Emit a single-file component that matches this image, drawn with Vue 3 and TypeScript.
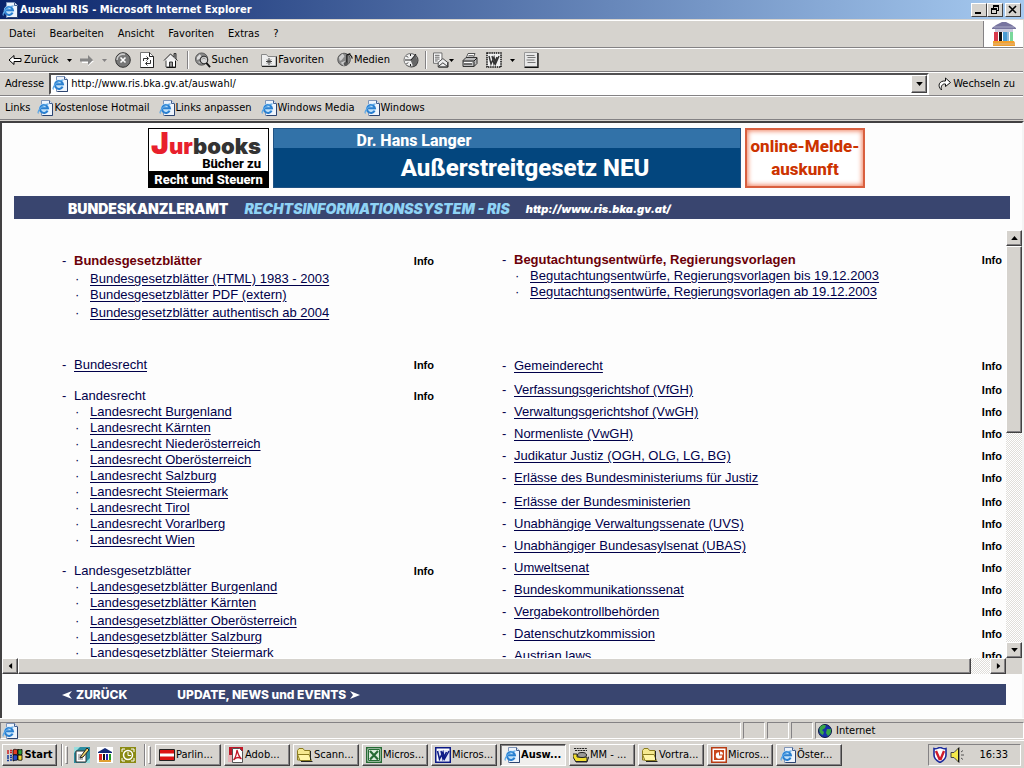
<script setup lang="ts">
import { ref } from 'vue'

interface Section {
  title: string
  space: string
  kind?: 'accent' | 'plain'
  items?: { text: string; loose?: boolean }[]
}

const address = ref('http://www.ris.bka.gv.at/auswahl/')
const menus = ['Datei', 'Bearbeiten', 'Ansicht', 'Favoriten', 'Extras', '?']
const quickLinks = ['Kostenlose Hotmail', 'Links anpassen', 'Windows Media', 'Windows']

const leftSections: Section[] = [
  {
    title: 'Bundesgesetzblätter', space: 'first', kind: 'accent',
    items: [
      { text: 'Bundesgesetzblätter (HTML) 1983 - 2003', loose: true },
      { text: 'Bundesgesetzblätter PDF (extern)' },
      { text: 'Bundesgesetzblätter authentisch ab 2004', loose: true },
    ],
  },
  { title: 'Bundesrecht', space: 'far' },
  {
    title: 'Landesrecht', space: 'mid', kind: 'plain',
    items: ['Burgenland', 'Kärnten', 'Niederösterreich', 'Oberösterreich', 'Salzburg', 'Steiermark', 'Tirol', 'Vorarlberg', 'Wien']
      .map((land) => ({ text: 'Landesrecht ' + land })),
  },
  {
    title: 'Landesgesetzblätter', space: 'mid', kind: 'plain',
    items: [
      { text: 'Landesgesetzblätter Burgenland' },
      { text: 'Landesgesetzblätter Kärnten' },
      { text: 'Landesgesetzblätter Oberösterreich', loose: true },
      { text: 'Landesgesetzblätter Salzburg' },
      { text: 'Landesgesetzblätter Steiermark' },
    ],
  },
]

const rightSections: Section[] = [
  {
    title: 'Begutachtungsentwürfe, Regierungsvorlagen', space: 'first', kind: 'accent',
    items: [
      { text: 'Begutachtungsentwürfe, Regierungsvorlagen bis 19.12.2003' },
      { text: 'Begutachtungsentwürfe, Regierungsvorlagen ab 19.12.2003' },
    ],
  },
  { title: 'Gemeinderecht', space: 'farther' },
  { title: 'Verfassungsgerichtshof (VfGH)', space: 'wide' },
  { title: 'Verwaltungsgerichtshof (VwGH)', space: 'near' },
  { title: 'Normenliste (VwGH)', space: 'near' },
  { title: 'Judikatur Justiz (OGH, OLG, LG, BG)', space: 'near' },
  { title: 'Erlässe des Bundesministeriums für Justiz', space: 'near' },
  { title: 'Erlässe der Bundesministerien', space: 'wide' },
  { title: 'Unabhängige Verwaltungssenate (UVS)', space: 'near' },
  { title: 'Unabhängiger Bundesasylsenat (UBAS)', space: 'near' },
  { title: 'Umweltsenat', space: 'near' },
  { title: 'Bundeskommunikationssenat', space: 'near' },
  { title: 'Vergabekontrollbehörden', space: 'near' },
  { title: 'Datenschutzkommission', space: 'near' },
  { title: 'Austrian laws', space: 'near' },
]
const columns = [leftSections, rightSections]

const tasks = [
  { icon: 'flag', text: 'Parlin...' },
  { icon: 'pdf', text: 'Adob...' },
  { icon: 'folder', text: 'Scann...' },
  { icon: 'excel', text: 'Micros...' },
  { icon: 'wordblue', text: 'Micros...' },
  { icon: 'ie', text: 'Ausw...', active: true },
  { icon: 'cab', text: 'MM - ...' },
  { icon: 'folder', text: 'Vortra...' },
  { icon: 'ppt', text: 'Micros...' },
  { icon: 'ie', text: 'Öster...' },
]
</script>

<template>
  <svg class="sprite" aria-hidden="true">
    <symbol id="ie" viewBox="0 0 16 16">
      <path d="M4.500 .5h8l3 3v12h-11z" fill="#eef4fc" stroke="#7f95b8" />
      <path d="M12.500 .5v3h3" fill="#dce6f5" stroke="#44608f" />
      <path d="M15.500 4v11.500h-10" fill="none" stroke="#2c4470" />
      <circle cx="6.800" cy="8.500" r="5" fill="#bfe0fa" />
      <path d="M10.600 10.800a4 4 0 1 1 .4-2.500H4" fill="none" stroke="#2a7fd0" stroke-width="2" />
      <path d="M1.500 13.500C-.5 11 6 4.200 11.500 3.800" fill="none" stroke="#5ba7e6" stroke-width="1.200" />
    </symbol>
    <symbol id="back" viewBox="0 0 14 12"><path d="M1 6l5-4.500V4.500h7v3H6v3z" fill="#fff" stroke="#000" /></symbol>
    <symbol id="fwd" viewBox="0 0 14 12"><path d="M14 7L8 12V9H2V7z" fill="#fff" /><path d="M13 6L8 1v3.500H0v3h8V11z" fill="#868686" /></symbol>
    <symbol id="caret" viewBox="0 0 5 3"><path d="M0 0h5L2.500 3z" fill="currentColor" /></symbol>
    <symbol id="stop" viewBox="0 0 16 16">
      <circle cx="8" cy="8" r="7.300" fill="#777" stroke="#333" /><path d="M2 8a6 6 0 0 1 8-5.500" fill="none" stroke="#ccc" stroke-width="1.500" />
      <path d="M5.500 5.500l5 5M10.500 5.500l-5 5" stroke="#fff" stroke-width="1.600" />
    </symbol>
    <symbol id="refresh" viewBox="0 0 14 16">
      <path d="M.5.500h9l4 4v11H.5z" fill="#fff" stroke="#777" /><path d="M9.500.500v4h4M13.500 4.500v11H.5" fill="none" stroke="#222" />
      <path d="M3.500 9V6.500H8M6.500 4.500l2 2-2 2M10.500 8v3.500H6M7.500 9.500l-2 2 2 2" fill="none" stroke="#333" />
    </symbol>
    <symbol id="home" viewBox="0 0 16 16">
      <path d="M3 7.500v7.500h9.500V7" fill="#fff" stroke="#444" /><path d="M1 8.500L7.500 2l7 6.500" fill="#eee" stroke="#222" />
      <path d="M11 5V1.500h2V7" fill="#999" stroke="#333" /><path d="M6.500 15v-5h3v5z" fill="#999" stroke="#333" /><path d="M12.500 9v6.500h-9" stroke="#111" fill="none" />
    </symbol>
    <symbol id="search" viewBox="0 0 17 16">
      <circle cx="7" cy="7" r="6.500" fill="#888" stroke="#555" /><path d="M2 5l3-3 2 2-2 3-3 1zM3 10l4-1 1 3" fill="#ddd" />
      <circle cx="9.500" cy="8" r="4" fill="#d8d8d8" stroke="#333" stroke-width="1.200" /><path d="M12 11l4 4.500" stroke="#111" stroke-width="2" />
      <path d="M7.500 7.500c1-2 3-2 4 0" stroke="#888" fill="none" />
    </symbol>
    <symbol id="fav" viewBox="0 0 16 14">
      <path d="M.5 13V1.500h5l1.500 2h8v9.500z" fill="#eee" stroke="#888" /><path d="M15.500 3.500v10H1" stroke="#222" fill="none" />
      <path d="M8 5v7M5 8.500h6M6 6.500l4 4M10 6.500l-4 4" stroke="#444" />
    </symbol>
    <symbol id="media" viewBox="0 0 17 16">
      <circle cx="7.500" cy="7.500" r="6.700" fill="#888" stroke="#555" /><path d="M2 5l4-4 2 3-3 4-2 1zM4 11l4-2 2 4-3 1z" fill="#ccc" />
      <path d="M10.500 12V2.500l3-1c0 2 3 2 2.500 5" fill="none" stroke="#111" stroke-width="1.300" /><circle cx="9" cy="12" r="2" fill="#555" />
    </symbol>
    <symbol id="history" viewBox="0 0 16 16">
      <circle cx="8.500" cy="8.500" r="7" fill="#444" /><circle cx="7.500" cy="8" r="6.500" fill="#f0f0f0" stroke="#777" />
      <path d="M7.500 8L13 2v4l2 2-2 4-3 2z" fill="#666" /><path d="M7.500 2v2M2 8h2M3.500 4l1.500 1.500M3.500 12L5 10.500M7.500 12v2M4 8h4l5-6" stroke="#222" fill="none" />
    </symbol>
    <symbol id="mail" viewBox="0 0 17 16">
      <path d="M.5.500h9v11h-9z" fill="#fff" stroke="#666" /><path d="M2 3h5M2 5h5M2 7h5M2 9h3" stroke="#555" />
      <path d="M5.500 10.500l5-4 5 4v5h-10z" fill="#eee" stroke="#444" /><path d="M5.500 15l5-4 5 4M16 10v5.500H6" fill="none" stroke="#333" />
    </symbol>
    <symbol id="print" viewBox="0 0 16 15">
      <path d="M4 6l2-5h7l-2 5z" fill="#fff" stroke="#555" /><path d="M6.500 3h5M6 4.500h5" stroke="#777" />
      <path d="M1 8l3-3h11v6l-3 3H1z" fill="#bbb" stroke="#333" /><path d="M1 8.500h11l3-3M12 9v5M2 11.500h8" stroke="#222" fill="none" /><path d="M2 10h8" stroke="#fff" />
    </symbol>
    <symbol id="wordgray" viewBox="0 0 16 16">
      <rect x="1" y="1" width="14" height="14" fill="#f2f2f2" stroke="#111" stroke-width="1.500" stroke-dasharray="1.500 .7" />
      <path d="M3 4l2 8 3-7 1.500 7L13 4M6 4l2 8 3-7" fill="none" stroke="#333" stroke-width="1.400" />
    </symbol>
    <symbol id="notes" viewBox="0 0 15 16">
      <path d="M1 .5h13v14H1z" fill="#e8e8e8" stroke="#999" /><path d="M14.500 1v14.500H1" fill="none" stroke="#111" stroke-width="1.300" /><path d="M3 3.500h8M4 5.500h8M3 8h8M4 10.500h8" stroke="#777" />
    </symbol>
    <symbol id="go" viewBox="0 0 14 14"><path d="M3.500 13C-1 9 1 3.500 7.500 4V1l5 4.500-5 4V7C4.500 6.500 2.500 9 3.500 13z" fill="#fff" stroke="#111" /></symbol>
    <symbol id="temple" viewBox="0 0 24 24">
      <path d="M0 6l4-3 6-3h4l6 3 4 3v1H0z" fill="#77749f" /><path d="M3 7h18v3H3z" fill="#c9c9dc" /><path d="M2 5h20" stroke="#aaa9c6" />
      <path d="M2 10h4v9H2z" fill="#d8394b" /><path d="M7 10h3v9H7z" fill="#111" /><path d="M11 10h4v9h-4z" fill="#4a9bd3" /><path d="M15 10h2v9h-2z" fill="#8bb9dd" /><path d="M18 10h3v9h-3z" fill="#79d79a" />
      <path d="M1 19h21l1 2v3H1z" fill="#f3a12c" /><path d="M1 22h22" stroke="#d9b58e" />
    </symbol>
    <symbol id="winflag" viewBox="0 0 17 14">
      <path d="M7 2c2-1.500 3 0 4.500-.5v5C9.500 7 9 6 7 7z" fill="#e33d20" stroke="#000" stroke-width=".8" /><path d="M12 1.500c1.500 0 2 .5 4 0v5c-2 .8-2.500 0-4 0z" fill="#2fa43a" stroke="#000" stroke-width=".8" />
      <path d="M7 7.500c2-1.500 3 0 4.500-.5v5C9.500 12.500 9 12 7 13z" fill="#2748c8" stroke="#000" stroke-width=".8" /><path d="M12 7c1.500 0 2 .5 4 0v5c-2 .8-2.500 0-4 0z" fill="#f2d72e" stroke="#000" stroke-width=".8" />
      <path d="M1 3h2M4 2.500h2M1 5h2M4 4.500h2" stroke="#c22" stroke-width="1.500" /><path d="M1 8h2M4 7.500h2M1 10h2M4 9.500h2M1 12.500h2M4 12h2" stroke="#113a9c" stroke-width="1.500" />
    </symbol>
    <symbol id="desktop" viewBox="0 0 16 16">
      <path d="M0 0h16v16H0z" fill="#2c8ea0" /><path d="M0 0h6L0 6zM16 16h-5l5-5z" fill="#9dd" /><path d="M2 4h10v11H2z" fill="#fff" stroke="#333" /><path d="M4 8h3M4 10h5M4 12h5" stroke="#777" /><path d="M7 9l6-8 2 2-6 7-3 1z" fill="#f1d36b" stroke="#222" />
    </symbol>
    <symbol id="minitemple" viewBox="0 0 16 16">
      <path d="M0 0h16v16H0z" fill="#fff" /><path d="M1 5l7-4 7 4v1H1z" fill="#142a78" /><path d="M2 7h3v6H2z" fill="#d22" /><path d="M6 7h2v6H6z" fill="#111" /><path d="M9 7h2v6H9z" fill="#22b" /><path d="M12 7h2v6h-2z" fill="#292" /><path d="M2 14h12" stroke="#e0a030" stroke-width="2" />
    </symbol>
    <symbol id="outlook" viewBox="0 0 16 16">
      <path d="M0 0h16v16H0z" fill="#8a8a12" /><path d="M2 2h3M2 2v3M14 2h-3M14 2v3M2 14h3M2 14v-3M14 14h-3M14 14v-3" stroke="#fff" /><circle cx="8" cy="8" r="4.500" fill="none" stroke="#fff" stroke-width="1.500" /><path d="M8 5v3.500h3" fill="none" stroke="#fff" />
    </symbol>
    <symbol id="flag" viewBox="0 0 16 16"><path d="M.5 2.500h15v11H.5z" fill="#fff" stroke="#222" /><path d="M1 3h14v3.500H1zM1 9.500h14V13H1z" fill="#dc1414" /></symbol>
    <symbol id="pdf" viewBox="0 0 16 16">
      <path d="M1 0h14v15H1z" fill="#c01828" /><path d="M4.500 1.500h7l3 3v11h-10z" fill="#fff" stroke="#555" /><path d="M5.500 13c2-2 3-6 3.500-10 1 4 2 7 4.500 9C11 10 8 10 5.500 13z" fill="none" stroke="#c01828" stroke-width="1.300" /><path d="M0 8h4v7H0z" fill="#e9b3b8" />
    </symbol>
    <symbol id="folder" viewBox="0 0 16 16">
      <path d="M.5 13V3.500l1.500-2h4l1.500 2H13V13z" fill="#f5e98f" stroke="#8a7c20" /><path d="M.5 7.500H12L14.500 13.500H3z" fill="#fff6a8" stroke="#8a7c20" /><path d="M13.500 4v9M4 14.500h11.500" stroke="#222" />
    </symbol>
    <symbol id="excel" viewBox="0 0 16 16"><path d="M.5.500h15v15H.5z" fill="#fff" stroke="#276b35" stroke-width="2" /><path d="M2.500 2.500h11v11h-11z" fill="#dcecdc" stroke="#276b35" /><path d="M4 4l8 8.500M12 4l-8 8.500" stroke="#276b35" stroke-width="2.200" /></symbol>
    <symbol id="wordblue" viewBox="0 0 16 16"><path d="M.5.500h15v15H.5z" fill="#fff" stroke="#0c1a86" stroke-width="2" /><path d="M3 3h11v11H3z" fill="#e3e6f6" /><path d="M2.500 4l2 8 3.500-7 1.500 7L14 4M6 4l2 8 3.500-7" fill="none" stroke="#0c1a86" stroke-width="1.500" /></symbol>
    <symbol id="cab" viewBox="0 0 16 16">
      <path d="M1 1.500h13M2 3.500h12" stroke="#222" stroke-dasharray="2 .7" /><path d="M0 7h4v3h10v5H3l-3-5z" fill="#f2df30" stroke="#222" /><ellipse cx="9" cy="8" rx="4.500" ry="2.500" fill="#999" stroke="#222" /><path d="M3 14.500h11l2-5" fill="none" stroke="#222" />
    </symbol>
    <symbol id="ppt" viewBox="0 0 16 16"><path d="M.5.500h15v15H.5z" fill="#fff" stroke="#b83c14" stroke-width="2" /><path d="M3 3h10v10H3z" fill="#c9471c" /><circle cx="8" cy="8.500" r="3.200" fill="#fff" /><path d="M8 8.500V4.500h4v4z" fill="#c9471c" /><path d="M9 7.500v-3c2 0 3 1 3 3z" fill="#fff" /></symbol>
    <symbol id="globe" viewBox="0 0 14 14"><circle cx="7" cy="7" r="6.500" fill="#1630a8" stroke="#0a1740" /><path d="M2 3c2-2 4-2.500 6-1.500L7 4 4 6l2 2-1 3C2 10 .5 7 2 3zM9 5l4 0c.5 3-.5 5-3 7L8 9z" fill="#37a545" /></symbol>
    <symbol id="shield" viewBox="0 0 14 16"><path d="M1 1.500c3 1 4-1 6-1 2 0 3 2 6 1V8c0 4-3 6-6 7.500C4 14 1 12 1 8z" fill="#fff" stroke="#1c2a9c" stroke-width="1.600" /><path d="M3 4l3.500 8h1.200L11 4" fill="none" stroke="#cf1c2c" stroke-width="2.400" /></symbol>
    <symbol id="speaker" viewBox="0 0 16 16"><path d="M1 5.500h3l5-5v15l-5-5H1z" fill="#f5e94a" stroke="#444" /><path d="M8.500 1v14" stroke="#111" /><path d="M11 5l2-1.500M11 8h3M11 11l2 1.500" stroke="#555" /></symbol>
    <symbol id="arrowhead" viewBox="0 0 10 8"><path d="M10 4L0 0l3 4-3 4z" fill="#fff" /></symbol>
  </svg>

  <div class="window">
    <header class="titlebar">
      <svg class="i16"><use href="#ie" /></svg>
      <h1>Auswahl RIS - Microsoft Internet Explorer</h1>
      <button class="winbtn" aria-label="Minimieren"><svg viewBox="0 0 10 9"><path d="M1 7h6v2H1z" /></svg></button>
      <button class="winbtn" aria-label="Wiederherstellen"><svg viewBox="0 0 10 9"><path d="M3 0h6v6H7V5h1V2H4v1H3z" /><path d="M1 3h6v6H1zM2 5v3h4V5z" fill-rule="evenodd" /></svg></button>
      <button class="winbtn close" aria-label="Schließen"><svg viewBox="0 0 10 9"><path d="M1 1l7 7M8 1L1 8" stroke="#000" stroke-width="1.600" /></svg></button>
    </header>

    <div class="band menuband">
      <nav class="menus"><button v-for="m in menus" :key="m">{{ m }}</button></nav>
      <div class="brand"><svg><use href="#temple" /></svg></div>
    </div>

    <div class="band toolbar">
      <button class="t-back"><svg class="arrow"><use href="#back" /></svg>Zurück</button>
      <button class="drop" aria-label="Zurück-Liste"><svg class="caret"><use href="#caret" /></svg></button>
      <button aria-label="Vorwärts"><svg class="arrow"><use href="#fwd" /></svg></button>
      <button class="drop dim" aria-label="Vorwärts-Liste"><svg class="caret"><use href="#caret" /></svg></button>
      <button class="solo" aria-label="Abbrechen"><svg class="i16"><use href="#stop" /></svg></button>
      <button class="solo" aria-label="Aktualisieren"><svg class="i16"><use href="#refresh" /></svg></button>
      <button class="solo" aria-label="Startseite"><svg class="i16"><use href="#home" /></svg></button>
      <i class="sep"></i>
      <button class="named"><svg class="i16"><use href="#search" /></svg>Suchen</button>
      <button class="named"><svg class="i16"><use href="#fav" /></svg>Favoriten</button>
      <button class="named"><svg class="i16"><use href="#media" /></svg>Medien</button>
      <button class="hist" aria-label="Verlauf"><svg class="i16"><use href="#history" /></svg></button>
      <i class="sep"></i>
      <button aria-label="E-Mail"><svg class="i16"><use href="#mail" /></svg><svg class="caret"><use href="#caret" /></svg></button>
      <button class="tail" aria-label="Drucken"><svg class="i16"><use href="#print" /></svg></button>
      <button class="tail" aria-label="Bearbeiten"><svg class="i16"><use href="#wordgray" /></svg></button>
      <button class="tail" aria-label="Bearbeiten-Liste"><svg class="caret"><use href="#caret" /></svg></button>
      <button class="tail" aria-label="Diskussion"><svg class="i16"><use href="#notes" /></svg></button>
    </div>

    <div class="band addressbar">
      <label for="addr">Adresse</label>
      <div class="field">
        <svg class="i16"><use href="#ie" /></svg>
        <input id="addr" v-model="address" type="text" />
        <button class="raised" aria-label="Adressliste"><svg class="bigcaret"><use href="#caret" /></svg></button>
      </div>
      <button class="go"><svg><use href="#go" /></svg>Wechseln zu</button>
    </div>

    <div class="band linkbar">
      <span>Links</span>
      <a v-for="l in quickLinks" :key="l" href="#"><svg class="i16"><use href="#ie" /></svg>{{ l }}</a>
    </div>

    <main class="page">
      <div class="ads">
        <a href="#" class="jur">
          <span class="jurname"><b>J</b><em>ur</em>books</span>
          <span class="jurline">Bücher zu</span>
          <span class="jurfoot">Recht und Steuern</span>
        </a>
        <a href="#" class="langer"><span class="who">Dr. Hans Langer</span><span class="what">Außerstreitgesetz NEU</span></a>
        <a href="#" class="melde"><span>online-Melde-</span><span>auskunft</span></a>
      </div>

      <div class="ribbon">
        <span class="bka">BUNDESKANZLERAMT</span>
        <span class="ris">RECHTSINFORMATIONSSYSTEM - RIS</span>
        <span class="url">http://www.ris.bka.gv.at/</span>
      </div>

      <section class="frame">
        <div class="view">
          <div v-for="(col, c) in columns" :key="c" class="col">
            <div v-for="s in col" :key="s.title" class="group" :class="s.space">
              <div class="head">
                <span class="dash">-</span>
                <h2 v-if="s.kind" :class="s.kind">{{ s.title }}</h2>
                <a v-else class="lnk" href="#">{{ s.title }}</a>
                <a class="info" href="#">Info</a>
              </div>
              <ul v-if="s.items">
                <li v-for="it in s.items" :key="it.text" :class="{ loose: it.loose }"><span class="dot">·</span><a class="lnk" href="#">{{ it.text }}</a></li>
              </ul>
            </div>
          </div>
        </div>
        <div class="vbar">
          <button class="raised" aria-label="Nach oben"><svg class="bigcaret up"><use href="#caret" /></svg></button>
          <div class="raised vthumb"></div>
          <div class="vtrack"></div>
          <button class="raised" aria-label="Nach unten"><svg class="bigcaret"><use href="#caret" /></svg></button>
        </div>
        <div class="hbar">
          <button class="raised" aria-label="Nach links"><svg class="bigcaret left"><use href="#caret" /></svg></button>
          <div class="raised hthumb"></div>
          <div class="htrack"></div>
          <button class="raised" aria-label="Nach rechts"><svg class="bigcaret right"><use href="#caret" /></svg></button>
        </div>
        <div class="corner"></div>
      </section>

      <nav class="bottomnav">
        <a href="#"><svg class="flip"><use href="#arrowhead" /></svg>ZURÜCK</a>
        <a href="#">UPDATE, NEWS und EVENTS<svg><use href="#arrowhead" /></svg></a>
      </nav>
    </main>

    <footer class="status">
      <div class="cell msg"><svg class="i16"><use href="#ie" /></svg></div>
      <div class="cell tiny"></div><div class="cell tiny"></div><div class="cell tiny"></div>
      <div class="cell zone"><svg class="i14"><use href="#globe" /></svg>Internet</div>
    </footer>

    <div class="taskbar">
      <button class="raised start"><svg><use href="#winflag" /></svg>Start</button>
      <i class="sep"></i><i class="grip"></i>
      <div class="quick">
        <button aria-label="Desktop anzeigen"><svg class="i16"><use href="#desktop" /></svg></button>
        <button aria-label="Browser"><svg class="i16"><use href="#minitemple" /></svg></button>
        <button aria-label="Outlook"><svg class="i16"><use href="#outlook" /></svg></button>
      </div>
      <i class="sep"></i><i class="grip"></i>
      <div class="tasks">
        <button v-for="(t, n) in tasks" :key="n" class="raised" :class="{ active: t.active }"><svg class="i16"><use :href="'#' + t.icon" /></svg>{{ t.text }}</button>
      </div>
      <div class="tray">
        <svg class="i16"><use href="#shield" /></svg><svg class="i16"><use href="#speaker" /></svg>
        <time>16:33</time>
      </div>
    </div>
  </div>
</template>

<style>
body { margin: 0; background: #d6d3ce; }
</style>

<style scoped>
* { box-sizing: border-box; }
.sprite { position: absolute; width: 0; height: 0; }
.window { display: flex; flex-direction: column; height: 100vh; min-height: 560px; overflow: hidden; background: #d6d3ce; color: #000; font: 11px/14px "DejaVu Sans Condensed", "DejaVu Sans", sans-serif; }
button { font: inherit; color: inherit; background: none; border: 0; padding: 0; margin: 0; display: flex; align-items: center; white-space: nowrap; }
a { color: inherit; text-decoration: none; }
svg { flex: none; display: block; }
.i16 { width: 16px; height: 16px; }
.i14 { width: 14px; height: 14px; }
.caret { width: 5px; height: 3px; }
.bigcaret { width: 7px; height: 4px; }
.up { transform: rotate(180deg); }
.left { transform: rotate(90deg); }
.right { transform: rotate(-90deg); }
.raised { background: #d6d3ce; border: 1px solid; border-color: #fff #424142 #424142 #fff; box-shadow: inset -1px -1px #848284; justify-content: center; }

.titlebar { display: flex; align-items: center; height: 19px; flex: none; padding: 0 3px 0 2px; background: linear-gradient(to right, #0a246a, #a6caf0); }
.titlebar h1 { flex: 1; margin: 0 0 0 2px; color: #fff; font-size: 11px; font-weight: bold; line-height: 18px; }
.winbtn { width: 16px; height: 14px; justify-content: center; background: #d6d3ce; border: 1px solid; border-color: #fff #424142 #424142 #fff; }
.winbtn svg { width: 10px; height: 9px; }
.close { margin-left: 2px; }

.band { display: flex; align-items: center; flex: none; height: 24px; border-top: 1px solid #fff; border-bottom: 1px solid #848284; padding-left: 5px; margin-right: 1px; }
.menuband { height: 28px; margin-top: 1px; padding-left: 9px; }
.menus { display: flex; gap: 14px; flex: 1; }
.brand { align-self: stretch; width: 40px; display: flex; align-items: center; justify-content: center; background: #fff; border-left: 1px solid #848284; }
.brand svg { width: 24px; height: 24px; }

.toolbar { padding-left: 8px; }
.arrow { width: 14px; height: 12px; }
.t-back { gap: 2px; }
.drop { padding: 0 8px; }
.dim { color: #848284; }
.solo { margin-right: 8px; }
.sep { width: 2px; height: 18px; border-left: 1px solid #848284; border-right: 1px solid #fff; margin-right: 6px; }
.named { margin-right: 13px; gap: 1px; }
.hist { margin-right: 6px; }
.tail { margin-left: 8px; }

.addressbar { padding-right: 8px; }
.addressbar label { margin-right: 5px; }
.field { flex: 1; display: flex; align-items: center; align-self: stretch; background: #fff; border: 2px solid; border-color: #525152 #fff #fff #525152; padding-left: 1px; }
.field input { flex: 1; min-width: 0; border: 0; outline: 0; padding: 0 0 0 3px; background: none; font: inherit; color: #000; }
.field .raised { width: 16px; align-self: stretch; }
.go { margin-left: 9px; gap: 1px; }
.go svg { width: 14px; height: 14px; }
.linkbar { gap: 9px; }
.linkbar span { margin-right: -2px; }
.linkbar a { display: flex; align-items: center; gap: 1px; }

.page { flex: 1; min-height: 0; display: flex; flex-direction: column; margin-top: 1px; padding-top: 5px; background: #fdfdfd; border-top: 2px solid #424142; border-left: 2px solid #424142; border-right: 2px solid #f4f4f4; }
.ads { display: flex; gap: 4px; height: 60px; flex: none; padding-left: 146px; font-family: Roboto, "Liberation Sans", sans-serif; font-weight: 800; white-space: nowrap; }
.jur { width: 121px; border: 1px solid #000; display: flex; flex-direction: column; background: #fff; }
.jurname { height: 26px; padding-left: 2px; color: #333; font: 900 22px/28px Inter, sans-serif; }
.jurname b { color: #e8202c; font-size: 30px; line-height: 28px; }
.jurname em { color: #e8202c; font-style: normal; }
.jurline { height: 16px; padding-right: 7px; text-align: right; font-size: 13px; line-height: 17px; }
.jurfoot { flex: 1; background: #000; color: #fff; text-align: center; font-size: 13px; line-height: 17px; }
.langer { width: 468px; display: flex; flex-direction: column; align-items: center; color: #fff; background: linear-gradient(#3272a8 19px, #03467e 19px); border: 1px solid #1f5284; }
.who { padding-right: 186px; font-size: 16px; line-height: 24px; }
.what { padding-left: 36px; font-size: 24px; line-height: 30px; }
.melde { width: 120px; display: flex; flex-direction: column; align-items: center; padding-top: 5px; color: #cc3300; background: #fff; border: 2px solid #d9603f; box-shadow: inset 0 0 5px 1px #f08060; font-size: 17px; line-height: 23px; }

.ribbon { display: flex; align-items: center; gap: 16px; flex: none; height: 23px; margin: 8px 12px 0; padding: 2px 0 0 54px; background: #39456f; color: #fff; font-family: Inter, "Liberation Sans", sans-serif; font-weight: 900; white-space: nowrap; }
.bka { font-size: 14px; }
.ris { font-size: 14px; font-style: italic; color: #8fd3f5; }
.url { font-size: 11px; font-style: italic; }

.frame { flex: 1; min-height: 0; display: grid; grid-template-columns: minmax(0, 1fr) 16px; grid-template-rows: minmax(0, 1fr) 16px; margin-top: 11px; }
.view { overflow: hidden; display: grid; grid-template-columns: 440fr 506fr; padding: 22px 0 0 58px; color: #00004a; font: 13px/16px "Liberation Sans", Arial, sans-serif; }
.col { padding-right: 66px; }
.col + .col { padding-right: 4px; }
.col:first-child .first { margin-top: 1px; }
.near { margin-top: 6px; }
.wide { margin-top: 8px; }
.mid { margin-top: 15px; }
.far { margin-top: 36px; }
.farther { margin-top: 58px; }
.head { display: flex; height: 16px; white-space: nowrap; }
.dash { width: 12px; padding-left: 2px; }
.dash + * { flex: none; margin: 0 auto 0 2px; }
h2 { font-size: 13px; font-weight: normal; }
h2.accent { font-weight: bold; color: #6b0008; }
.info { color: #000; font-size: 11px; font-weight: bold; }
.lnk { text-decoration: underline; text-underline-offset: 2px; }
ul { list-style: none; margin: 0; padding: 0 0 0 15px; }
li { display: flex; white-space: nowrap; }
.loose { margin-top: 2px; }
.dot { width: 15px; }
.vbar { display: flex; flex-direction: column; }
.vbar button { height: 16px; width: 16px; }
.vthumb { flex: 47; }
.vtrack { flex: 53; }
.hbar { display: flex; }
.hbar button { width: 16px; height: 16px; }
.hthumb { flex: 98; }
.htrack { flex: 2; }
.vtrack, .htrack { background: repeating-conic-gradient(#fff 0 25%, #e0deda 0 50%) 0 0 / 2px 2px; }
.corner { background: #d6d3ce; }

.bottomnav { display: flex; align-items: center; gap: 50px; flex: none; height: 21px; margin: 10px 16px 13px; padding-left: 44px; background: #39456f; color: #fff; font: 800 12px/20px Inter, sans-serif; white-space: nowrap; }
.bottomnav a { display: flex; align-items: center; gap: 4px; }
.bottomnav svg { width: 10px; height: 8px; }
.flip { transform: scaleX(-1); }

.status { display: flex; gap: 2px; flex: none; height: 21px; padding-top: 3px; border-top: 1px solid #fff; }
.cell { display: flex; align-items: center; border: 1px solid; border-color: #848284 #fff #fff #848284; }
.msg { flex: 1; padding-left: 1px; }
.tiny { width: 22px; }
.zone { width: 209px; padding-left: 2px; gap: 4px; }

.taskbar { display: flex; align-items: center; flex: none; height: 28px; padding: 0 3px 0 2px; margin-top: 1px; border-top: 1px solid #fff; }
.start { width: 55px; height: 22px; font-weight: bold; gap: 1px; }
.start svg { width: 17px; height: 14px; }
.taskbar .sep { height: 22px; margin: 0 2px 0 4px; }
.grip { width: 3px; height: 18px; border: 1px solid; border-color: #fff #848284 #848284 #fff; }
.quick { display: flex; gap: 7px; margin: 0 4px 0 6px; }
.tasks { display: flex; gap: 3px; flex: 1; margin-left: 4px; }
.tasks button { width: 66px; height: 22px; padding-left: 3px; gap: 1px; justify-content: flex-start; overflow: hidden; }
.tasks .active { font-weight: bold; background: #f0efed; border-color: #424142 #fff #fff #424142; box-shadow: inset 1px 1px #848284; }
.tray { display: flex; align-items: center; gap: 2px; width: 93px; height: 22px; padding: 0 12px 0 3px; border: 1px solid; border-color: #848284 #fff #fff #848284; }
.tray time { margin-left: auto; }
</style>
